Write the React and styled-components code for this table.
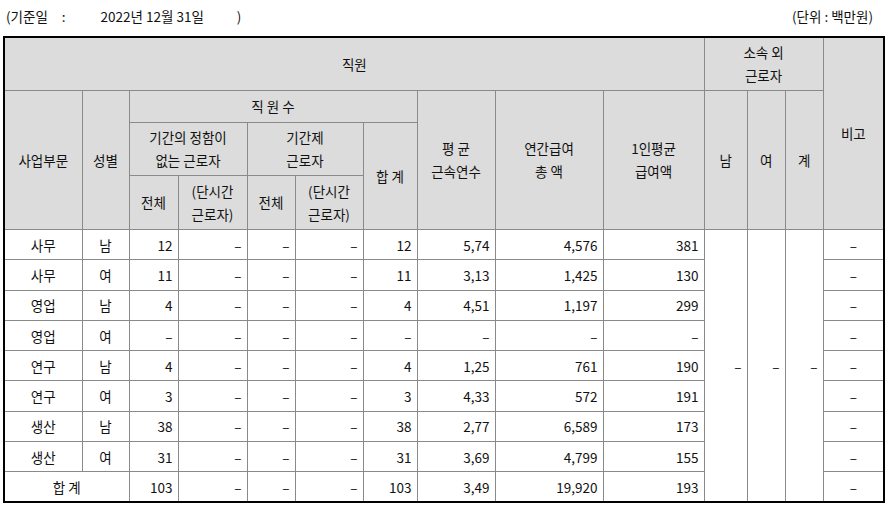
import React from "react";
import styled, { createGlobalStyle } from "styled-components";

const GlobalStyle = createGlobalStyle`
  body {
    margin: 0;
    background: #fff;
    font-family: "Noto Sans CJK KR", "Noto Sans", sans-serif;
    color: #111;
  }
`;

const widths = [78, 47, 49, 69, 48, 68, 54, 78, 108, 101, 43, 38, 38, 61];

const rows = [
  ["사무", "남", "12", "–", "–", "–", "12", "5,74", "4,576", "381"],
  ["사무", "여", "11", "–", "–", "–", "11", "3,13", "1,425", "130"],
  ["영업", "남", "4", "–", "–", "–", "4", "4,51", "1,197", "299"],
  ["영업", "여", "–", "–", "–", "–", "–", "–", "–", "–"],
  ["연구", "남", "4", "–", "–", "–", "4", "1,25", "761", "190"],
  ["연구", "여", "3", "–", "–", "–", "3", "4,33", "572", "191"],
  ["생산", "남", "38", "–", "–", "–", "38", "2,77", "6,589", "173"],
  ["생산", "여", "31", "–", "–", "–", "31", "3,69", "4,799", "155"],
];

const total = ["103", "–", "–", "–", "103", "3,49", "19,920", "193"];

const Page = styled.div`
  padding: 5px 0 0 3px;
  width: 883px;
`;

const TopLine = styled.div`
  display: flex;
  justify-content: space-between;
  align-items: center;
  height: 22px;
  padding: 0 13px 0 3px;
  margin-bottom: 9px;
  font-size: 13.5px;
`;

const Gap = styled.span`
  display: inline-block;
  width: ${(p) => p.$w}px;
`;

const Table = styled.table`
  border-collapse: collapse;
  table-layout: fixed;
  width: 882px;
  border: 2px solid #000;
  font-size: 13.5px;
`;

const Th = styled.th`
  background: #dcdcdc;
  border: 1px solid #8a8a8a;
  font-weight: normal;
  text-align: center;
  vertical-align: middle;
  line-height: 23px;
  padding: 0;
  height: ${(p) => p.$h || 0}px;
`;

const Row = styled.tr`
  height: 30.3px;
`;

const Td = styled.td`
  border: 1px solid #8a8a8a;
  padding: 0 ${(p) => (p.$align === "right" ? "5px" : "0")} 0 0;
  text-align: ${(p) => p.$align || "center"};
  vertical-align: middle;
  line-height: 18px;
  white-space: nowrap;
`;

export default function App() {
  return (
    <Page>
      <GlobalStyle />
      <TopLine>
        <span>
          (기준일<Gap $w={14} />:<Gap $w={35} />2022년 12월 31일<Gap $w={33} />)
        </span>
        <span>(단위 : 백만원)</span>
      </TopLine>
      <Table>
        <colgroup>
          {widths.map((w, i) => (
            <col key={i} style={{ width: w }} />
          ))}
        </colgroup>
        <thead>
          <tr>
            <Th colSpan={10} $h={52}>직원</Th>
            <Th colSpan={3}>
              소속 외<br />근로자
            </Th>
            <Th rowSpan={4}>비고</Th>
          </tr>
          <tr>
            <Th rowSpan={3}>사업부문</Th>
            <Th rowSpan={3}>성별</Th>
            <Th colSpan={5} $h={31}>직 원 수</Th>
            <Th rowSpan={3}>
              평 균<br />근속연수
            </Th>
            <Th rowSpan={3}>
              연간급여<br />총 액
            </Th>
            <Th rowSpan={3}>
              1인평균<br />급여액
            </Th>
            <Th rowSpan={3}>남</Th>
            <Th rowSpan={3}>여</Th>
            <Th rowSpan={3}>계</Th>
          </tr>
          <tr>
            <Th colSpan={2} $h={52}>
              기간의 정함이<br />없는 근로자
            </Th>
            <Th colSpan={2}>
              기간제<br />근로자
            </Th>
            <Th rowSpan={2}>합 계</Th>
          </tr>
          <tr>
            <Th $h={53}>전체</Th>
            <Th>
              (단시간<br />근로자)
            </Th>
            <Th>전체</Th>
            <Th>
              (단시간<br />근로자)
            </Th>
          </tr>
        </thead>
        <tbody>
          {rows.map((r, i) => (
            <Row key={i}>
              <Td>{r[0]}</Td>
              <Td>{r[1]}</Td>
              {r.slice(2).map((v, j) => (
                <Td key={j} $align="right">
                  {v}
                </Td>
              ))}
              {i === 0 && (
                <>
                  <Td rowSpan={9} $align="right">–</Td>
                  <Td rowSpan={9} $align="right">–</Td>
                  <Td rowSpan={9} $align="right">–</Td>
                </>
              )}
              <Td>–</Td>
            </Row>
          ))}
          <Row>
            <Td colSpan={2}>합 계</Td>
            {total.map((v, j) => (
              <Td key={j} $align="right">
                {v}
              </Td>
            ))}
            <Td>–</Td>
          </Row>
        </tbody>
      </Table>
    </Page>
  );
}
